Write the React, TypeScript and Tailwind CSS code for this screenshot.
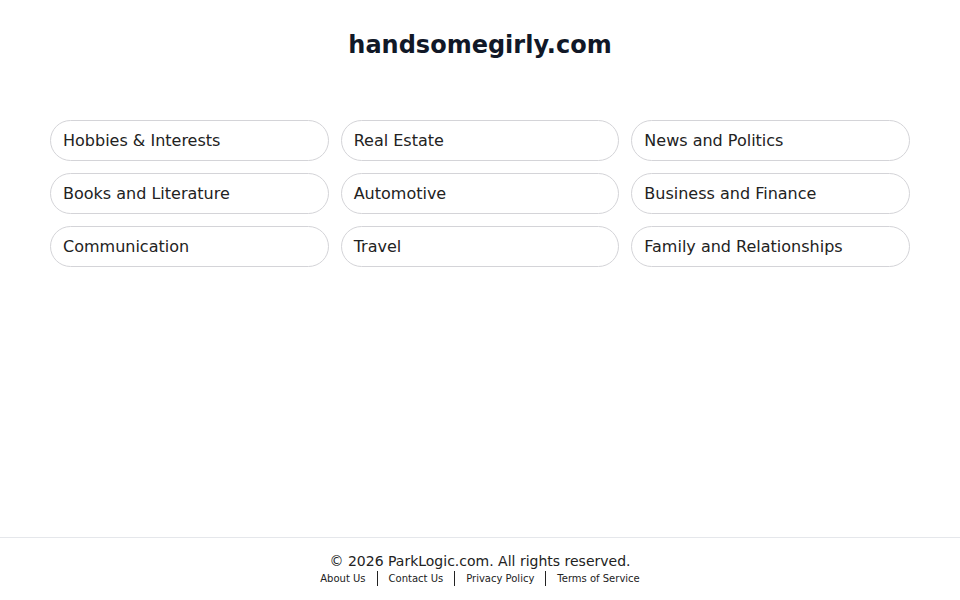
import React from 'react';

const topics = [
  'Hobbies & Interests',
  'Real Estate',
  'News and Politics',
  'Books and Literature',
  'Automotive',
  'Business and Finance',
  'Communication',
  'Travel',
  'Family and Relationships',
];

const links = ['About Us', 'Contact Us', 'Privacy Policy', 'Terms of Service'];

export default function App() {
  return (
    <div
      className="min-h-screen flex flex-col bg-white text-[#1f2937]"
      style={{ fontFamily: '"DejaVu Sans", Verdana, sans-serif' }}
    >
      <main className="flex-1 px-[50px]">
        <h1 className="pt-[29px] text-center text-[24px] leading-8 font-bold text-[#111827]">
          handsomegirly.com
        </h1>
        <div className="mt-[59px] grid grid-cols-3 gap-x-[12px] gap-y-[12px]">
          {topics.map((t) => (
            <a
              key={t}
              href="#"
              className="flex items-center h-[41px] px-[12px] rounded-full border border-[#d4d4d8] text-[16px] text-[#222222]"
            >
              {t}
            </a>
          ))}
        </div>
      </main>
      <footer className="border-t border-[#e5e7eb] pt-[13px] pb-[14px] text-center">
        <p className="text-[14px] leading-5 text-[#222222]">© 2026 ParkLogic.com. All rights reserved.</p>
        <div className="flex items-center justify-center text-[10px] leading-[15px] text-[#222222]">
          {links.map((l, i) => (
            <React.Fragment key={l}>
              {i > 0 && <span className="mx-[11px] h-[15px] border-l border-[#222222]" />}
              <a href="#">{l}</a>
            </React.Fragment>
          ))}
        </div>
      </footer>
    </div>
  );
}
